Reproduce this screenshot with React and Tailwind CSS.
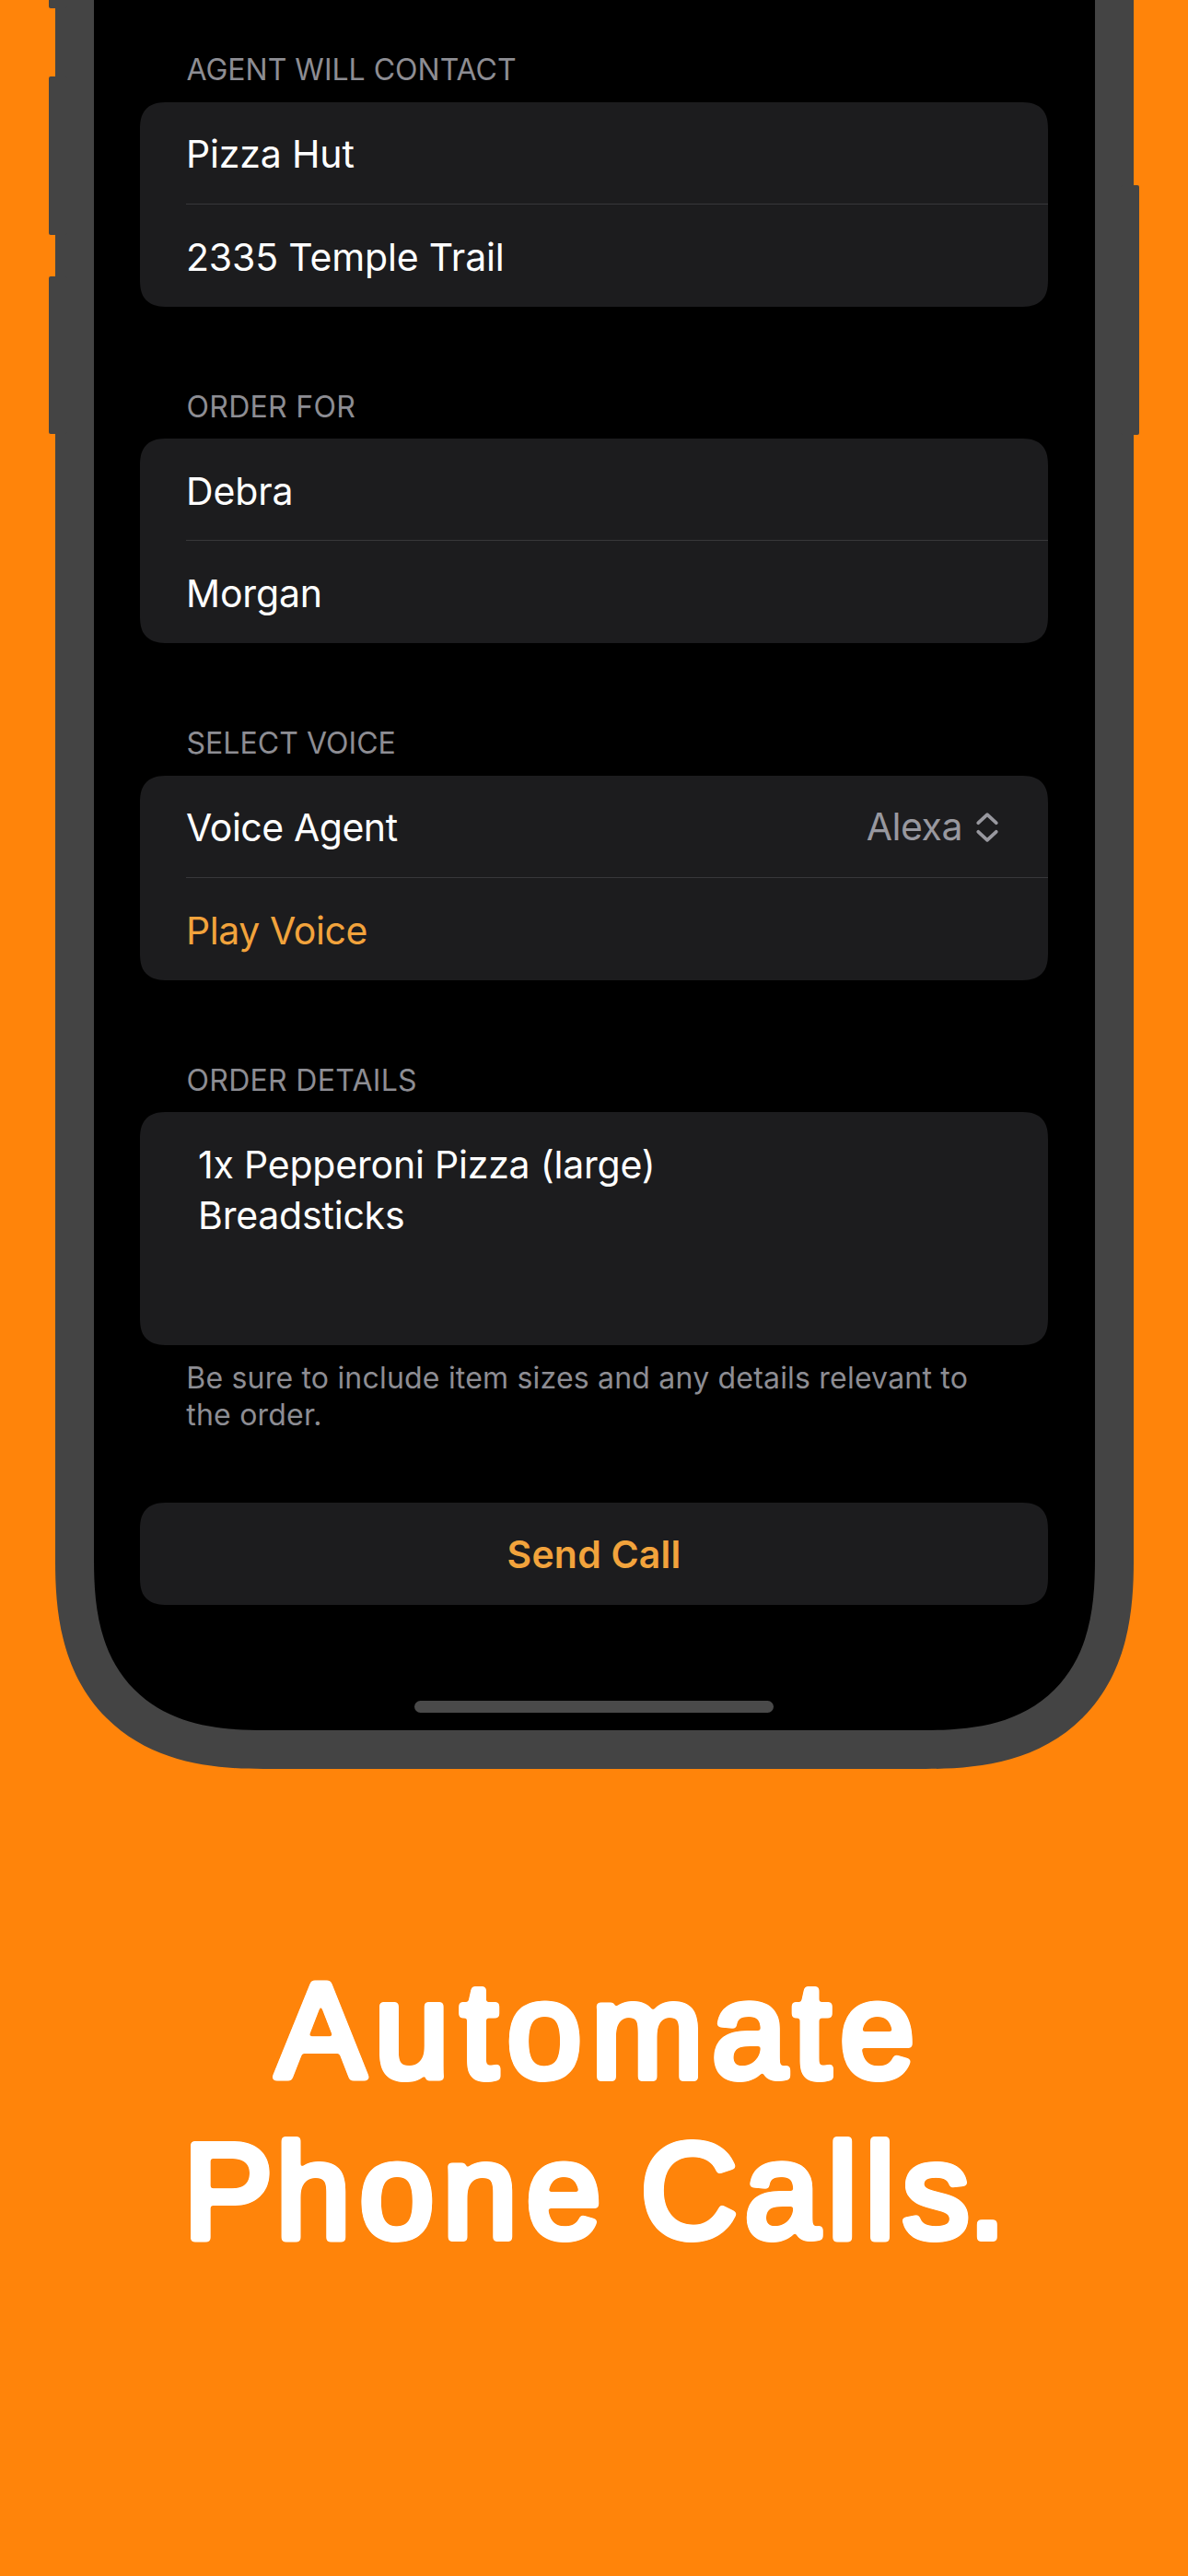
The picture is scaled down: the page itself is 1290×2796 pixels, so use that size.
function ChevronUpDown() {
  return (
    <svg className="mt-[-1px] h-[36px] w-[24px]" viewBox="0 0 24 36" fill="none" stroke="#98989f" strokeWidth="3.7" strokeLinecap="round" strokeLinejoin="round">
      <path d="M2.3 13.2 12 4.2l9.7 9" />
      <path d="M2.3 22.8 12 31.8l9.7-9" />
    </svg>
  );
}

function Section({ title, spacing = "tracking-normal", children, className = "" }) {
  return (
    <section className={className}>
      <h2 className={`pb-[14.4px] pl-[50.5px] pt-[1px] text-[32px] leading-[40px] text-[#8d8d93] ${spacing}`}>{title}</h2>
      {children}
    </section>
  );
}

function Card({ children, className = "" }) {
  return (
    <div className={`overflow-hidden rounded-[30px] bg-[#1c1c1e] [corner-shape:superellipse(1.4)] ${className}`}>
      {children}
    </div>
  );
}

function Row({ children, divided = false, className = "" }) {
  return (
    <div className={`pl-[50px] ${className}`}>
      <div className={`flex h-[111px] items-center justify-between pr-[54px] pt-[4.6px] ${divided ? "border-b border-[#37373a]" : ""}`}>
        {children}
      </div>
    </div>
  );
}

// Headline lettering: a round-joined outline plus a soft threshold gives the letters rounded ends.
function Headline() {
  return (
    <h1 className="mt-[197px] w-full">
      <svg className="block h-[347px] w-full" viewBox="0 0 1290 347">
        <filter id="round-ends" x="-5%" y="-10%" width="110%" height="120%" colorInterpolationFilters="sRGB">
          <feGaussianBlur stdDeviation="1.8" />
          <feComponentTransfer>
            <feFuncR type="linear" slope="0" intercept="1" />
            <feFuncG type="linear" slope="0" intercept="1" />
            <feFuncB type="linear" slope="0" intercept="1" />
            <feFuncA type="linear" slope="4.5" intercept="-1.75" />
          </feComponentTransfer>
        </filter>
        <g
          className="font-['Liberation_Sans',sans-serif] text-[146px] font-normal"
          fill="#fff"
          stroke="#fff"
          strokeWidth="8"
          strokeLinejoin="round"
          filter="url(#round-ends)"
        >
          <text y="138" x="299.5 406.6 500 550.5 642 773 861.5 912">Automate</text>
          <text y="311.7" x="199 299.5 390.3 480.4 571.5 655 695.5 808.6 898.4 939.3 979.8 1051.5">Phone Calls.</text>
        </g>
      </svg>
    </h1>
  );
}

export default function App() {
  return (
    <div className="relative flex h-[2796px] w-[1290px] flex-col items-center overflow-hidden bg-[#ff840a] font-[Inter,sans-serif]">
      <div className="relative h-[1919.7px] w-[1171px] shrink-0 rounded-b-[226px] bg-[#444] px-[42px] pb-[42px] [corner-shape:superellipse(1.3)]">
        <span className="absolute left-[-6.5px] top-[-20px] h-[29px] w-[20px] rounded-[2px] bg-[#444]" />
        <span className="absolute left-[-6.5px] top-[83px] h-[172px] w-[20px] rounded-[2px] bg-[#444]" />
        <span className="absolute left-[-6.5px] top-[300px] h-[171px] w-[20px] rounded-[2px] bg-[#444]" />
        <span className="absolute right-[-6.5px] top-[201px] h-[270.5px] w-[20px] rounded-[2px] bg-[#444]" />

        <main className="flex h-full flex-col rounded-b-[186px] bg-black px-[50.5px] pt-[55.3px] text-[41px] tracking-[-0.15px] text-white [corner-shape:superellipse(1.36)]">
          <Section title="AGENT WILL CONTACT" spacing="tracking-[0px]">
            <Card>
              <Row divided>Pizza Hut</Row>
              <Row>2335 Temple Trail</Row>
            </Card>
          </Section>

          <Section title="ORDER FOR" spacing="tracking-[0.3px]" className="mt-[88.1px]">
            <Card>
              <Row divided>Debra</Row>
              <Row>Morgan</Row>
            </Card>
          </Section>

          <Section title="SELECT VOICE" spacing="tracking-[0.05px]" className="mt-[88.1px]">
            <Card>
              <Row divided className="tracking-[-0.45px]">
                <span>Voice Agent</span>
                <span className="flex items-center gap-[15px] text-[#98989f]">
                  <span className="-mt-[2px]">Alexa</span>
                  <ChevronUpDown />
                </span>
              </Row>
              <Row className="tracking-[-0.43px] text-[#f2a33c]">Play Voice</Row>
            </Card>
          </Section>

          <Section title="ORDER DETAILS" spacing="tracking-[0.3px]" className="mt-[88.1px]">
            <Card className="h-[253px] pl-[63px] pt-[29.4px] leading-[55.5px] tracking-[-0.2px]">
              <p>1x Pepperoni Pizza (large)</p>
              <p>Breadsticks</p>
            </Card>
            <p className="pl-[50.3px] pt-[15.8px] text-[32px] leading-[40.2px] tracking-[0.2px] text-[#8d8d93]">
              Be sure to include item sizes and any details relevant to
              <br />
              the order.
            </p>
          </Section>

          <Card className="mt-[74.5px] h-[111.5px] shrink-0">
            <div className="flex h-full items-center justify-center pt-[2.4px] font-semibold tracking-[0.2px] text-[#f2a33c]">Send Call</div>
          </Card>

          <div className="mx-auto mt-[103.9px] h-[13px] w-[390px] shrink-0 rounded-full bg-[#4a4a4a]" />
        </main>
      </div>

      <Headline />
    </div>
  );
}
